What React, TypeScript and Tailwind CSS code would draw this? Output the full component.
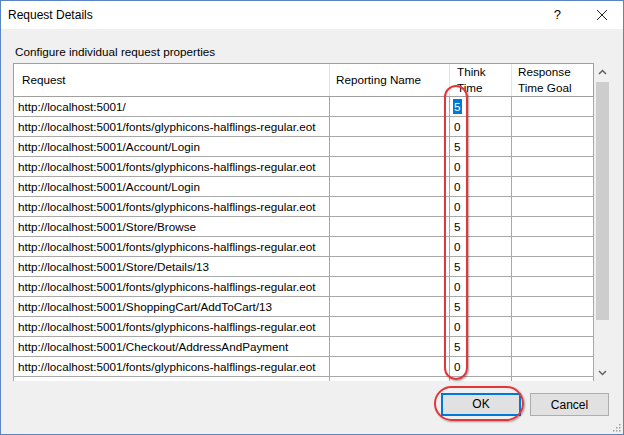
import React from "react";

const F = "http://localhost:5001/fonts/glyphicons-halflings-regular.eot";
const rows: [string, string][] = [
  ["http://localhost:5001/", "5"],
  [F, "0"],
  ["http://localhost:5001/Account/Login", "5"],
  [F, "0"],
  ["http://localhost:5001/Account/Login", "0"],
  [F, "0"],
  ["http://localhost:5001/Store/Browse", "5"],
  [F, "0"],
  ["http://localhost:5001/Store/Details/13", "5"],
  [F, "0"],
  ["http://localhost:5001/ShoppingCart/AddToCart/13", "5"],
  [F, "0"],
  ["http://localhost:5001/Checkout/AddressAndPayment", "5"],
  [F, "0"],
  [F, "0"],
];

export default function App() {
  return (
    <div className="relative w-[624px] h-[435px] border border-[#5b84c4] bg-[#f0f0f0] flex flex-col overflow-hidden font-['Liberation_Sans',Arial,sans-serif] text-[11.7px] text-black">
      {/* Title bar */}
      <div className="h-[28px] shrink-0 bg-white flex items-center pl-[7px]">
        <span className="text-[12px]">Request Details</span>
        <span className="ml-auto text-[13px] mr-[35px]">?</span>
        <svg width="12" height="12" viewBox="0 0 12 12" className="mr-[15px]">
          <path d="M1 1 L11 11 M11 1 L1 11" stroke="#222" strokeWidth="1" fill="none" />
        </svg>
      </div>

      {/* Body */}
      <div className="flex-1 flex flex-col pl-[12px]">
        <div className="mt-[16px] h-[14px] leading-[14px] pl-[2px]">
          Configure individual request properties
        </div>
        <div className="mt-[4px] flex h-[318px]">
          {/* Grid */}
          <div className="w-[581px] flex flex-col overflow-hidden">
            <div className="h-[34px] shrink-0 flex bg-white border border-[#a0a0a0] border-b-[#a0a0a0]">
              <div className="w-[316px] border-r border-[#e3e3e3] flex items-center pl-[8px]">Request</div>
              <div className="w-[120px] border-r border-[#e3e3e3] flex items-center pl-[6px]">Reporting Name</div>
              <div className="w-[62px] border-r border-[#e3e3e3] flex flex-col justify-center pl-[7px] leading-[16px]">
                <span>Think</span>
                <span>Time</span>
              </div>
              <div className="w-[81px] flex flex-col justify-center pl-[6px] leading-[16px]">
                <span>Response</span>
                <span>Time Goal</span>
              </div>
            </div>
            {rows.map(([url, v], i) => (
              <div key={i} className="h-[20px] shrink-0 flex bg-white border-l border-r border-b border-[#a8a8a8]">
                <div className="w-[316px] border-r border-[#a8a8a8] pl-[4px] leading-[19px] whitespace-nowrap overflow-hidden">{url}</div>
                <div className="w-[120px] border-r border-[#a8a8a8]" />
                <div className="w-[62px] border-r border-[#a8a8a8] pl-[3px] flex items-center">
                  {i === 0 ? (
                    <span className="inline-block bg-[#0078d7] text-white px-[1px] h-[15px] leading-[15px]">{v}</span>
                  ) : (
                    <span className="pl-[1px] leading-[19px]">{v}</span>
                  )}
                </div>
                <div className="w-[81px]" />
              </div>
            ))}
          </div>
          {/* Scrollbar */}
          <div className="w-[17px] flex flex-col bg-[#f0f0f0]">
            <div className="h-[17px] shrink-0 flex items-center justify-center">
              <svg width="9" height="6" viewBox="0 0 9 6">
                <path d="M1 5 L4.5 1.5 L8 5" stroke="#606060" strokeWidth="1.5" fill="none" />
              </svg>
            </div>
            <div className="flex-1 relative">
              <div className="absolute left-[2px] right-[2px] top-[2px] h-[238px] bg-[#cdcdcd]" />
            </div>
            <div className="h-[17px] shrink-0 flex items-center justify-center">
              <svg width="9" height="6" viewBox="0 0 9 6">
                <path d="M1 1 L4.5 4.5 L8 1" stroke="#606060" strokeWidth="1.5" fill="none" />
              </svg>
            </div>
          </div>
        </div>

        {/* Buttons */}
        <div className="mt-[12px] flex justify-end gap-[9px] mr-[14px]">
          <button className="w-[80px] h-[23px] bg-[#e1e1e1] border-2 border-[#0078d7] text-[12px] leading-[19px]">OK</button>
          <button className="w-[79px] h-[23px] bg-[#e1e1e1] border border-[#adadad] text-[12px]">Cancel</button>
        </div>
      </div>

      {/* Resize grip */}
      <svg width="10" height="10" viewBox="0 0 10 10" className="absolute right-[2px] bottom-[2px]">
        <rect x="8" y="2" width="1.5" height="1.5" fill="#a0a0a0" />
        <rect x="5" y="5" width="1.5" height="1.5" fill="#a0a0a0" />
        <rect x="8" y="5" width="1.5" height="1.5" fill="#a0a0a0" />
        <rect x="2" y="8" width="1.5" height="1.5" fill="#a0a0a0" />
        <rect x="5" y="8" width="1.5" height="1.5" fill="#a0a0a0" />
        <rect x="8" y="8" width="1.5" height="1.5" fill="#a0a0a0" />
      </svg>

      {/* Red annotations */}
      <div className="absolute left-[443px] top-[84px] w-[24px] h-[295px] rounded-full border-[2.5px] border-[#e3363b] shadow-[1px_1px_2px_rgba(0,0,0,0.35)]" />
      <div className="absolute left-[433px] top-[385px] w-[90px] h-[35px] rounded-[18px] border-[2.5px] border-[#e3363b] shadow-[1px_1px_2px_rgba(0,0,0,0.35)]" />
    </div>
  );
}
